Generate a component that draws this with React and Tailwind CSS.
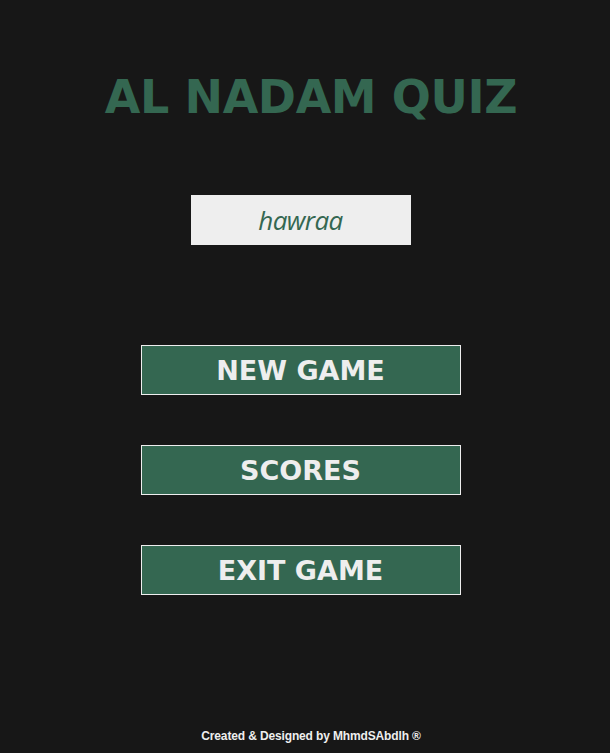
import React, { useState } from 'react';

export default function App() {
  const [name, setName] = useState('hawraa');

  const buttons = ['NEW GAME', 'SCORES', 'EXIT GAME'];

  return (
    <div className="min-h-[753px] w-full bg-[#171717]">
      <div className="w-[601px] flex flex-col items-center">
        {/* Title */}
        <h1 className="mt-[68px] h-[58px] pl-[21px] font-['Tahoma','DejaVu_Sans',sans-serif] text-[46px] leading-[58px] font-bold tracking-[-0.4px] text-[#346751]">
          AL NADAM QUIZ
        </h1>

        {/* Player name */}
        <input
          autoFocus
          value={name}
          onChange={(e) => setName(e.target.value)}
          className="mt-[69px] w-[220px] h-[50px] bg-[#eeeeee] text-center font-['Open_Sans','Noto_Sans',sans-serif] italic text-[26px] tracking-[-0.6px] text-[#346751] caret-[#222222] outline-none"
        />

        {/* Menu */}
        <div className="mt-[100px] flex flex-col gap-[50px]">
          {buttons.map((label) => (
            <button
              key={label}
              className="w-[320px] h-[50px] pt-[2px] bg-[#346751] border border-[#eeeeee] font-['Tahoma','DejaVu_Sans',sans-serif] text-[27px] font-bold text-[#eeeeee]"
            >
              {label}
            </button>
          ))}
        </div>

        {/* Footer */}
        <p className="mt-[132px] pl-[21px] font-['Liberation_Sans',Arial,sans-serif] text-[12px] font-bold tracking-[-0.14px] text-[#eeeeee]">
          Created &amp; Designed by MhmdSAbdlh ®
        </p>
      </div>
    </div>
  );
}
